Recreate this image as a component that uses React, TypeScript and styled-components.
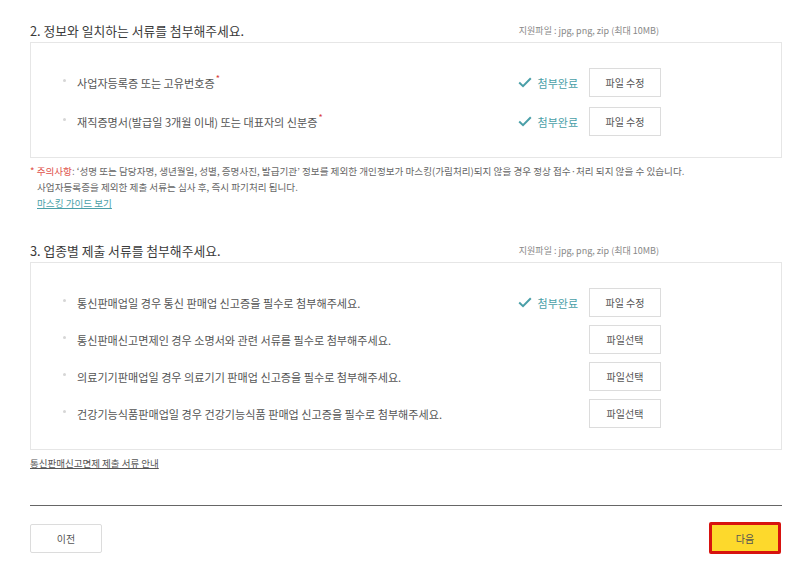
import styled, { createGlobalStyle } from "styled-components";

const GlobalStyle = createGlobalStyle`
  html, body {
    margin: 0;
    padding: 0;
    background: #fff;
  }
  body {
    font-family: "Noto Sans CJK KR", "Noto Sans", sans-serif;
    color: #333;
  }
`;

const Page = styled.div`
  width: 810px;
  box-sizing: border-box;
  padding: 18px 28px 0 30px;
`;

const SectionHead = styled.div`
  display: flex;
  justify-content: space-between;
  align-items: center;
  height: 24px;
  padding-right: 123px;
  & h2 {
    margin: 0;
    font-size: 12.8px;
    font-weight: 400;
    color: #3a3a3a;
  }
  & span {
    font-size: 9px;
    color: #888;
  }
`;

const Box = styled.div<{ $gap: number }>`
  border: 1px solid #e6e6e6;
  padding: 25px 120px 21px 32px;
  display: flex;
  flex-direction: column;
  gap: ${(p) => p.$gap}px;
`;

const Row = styled.div`
  display: flex;
  align-items: center;
  height: 29px;
`;

const Label = styled.div`
  flex: 1;
  display: flex;
  align-items: center;
  font-size: 11.1px;
  color: #555;
  &::before {
    content: "";
    width: 3px;
    height: 3px;
    border-radius: 50%;
    background: #d6d6d6;
    margin-right: 11px;
    margin-top: -4px;
  }
  & sup {
    color: #d9403a;
    font-size: 9px;
    line-height: 0;
    position: relative;
    top: -4px;
    margin-left: 1px;
  }
`;

const Done = styled.div`
  display: flex;
  align-items: center;
  gap: 6px;
  margin-right: 11px;
  font-size: 11px;
  color: #4a9fa8;
`;

const FileButton = styled.button`
  width: 72px;
  height: 29px;
  box-sizing: border-box;
  border: 1px solid #dcdcdc;
  background: #fff;
  font-family: inherit;
  font-size: 10px;
  color: #555;
  padding: 0;
`;

const Notice = styled.div`
  margin-top: 5px;
  font-size: 9.6px;
  line-height: 16px;
  color: #666;
  & p {
    margin: 0;
    padding-left: 7px;
  }
  & p.first {
    padding-left: 0;
  }
  & em {
    font-style: normal;
    color: #e0524a;
  }
  & a {
    margin-left: 7px;
    color: #4a9fa8;
    text-decoration: underline;
  }
`;

const Spacer = styled.div<{ $h: number }>`
  height: ${(p) => p.$h}px;
`;

const GuideLink = styled.a`
  display: block;
  margin-top: 6px;
  font-size: 9.5px;
  line-height: 14px;
  color: #555;
  text-decoration: underline;
`;

const Divider = styled.hr`
  margin: 35px 0 0;
  border: none;
  border-top: 1px solid #666;
`;

const Footer = styled.div`
  display: flex;
  justify-content: space-between;
  align-items: center;
  height: 34px;
  margin-top: 15px;
  padding-right: 1px;
`;

const NavButton = styled.button<{ $primary?: boolean }>`
  width: 72px;
  height: ${(p) => (p.$primary ? "32px" : "29px")};
  box-sizing: border-box;
  font-family: inherit;
  font-size: 10px;
  color: #555;
  padding: 0;
  background: ${(p) => (p.$primary ? "#fdd92c" : "#fff")};
  border: ${(p) => (p.$primary ? "3px solid #d7130f" : "1px solid #dcdcdc")};
  border-radius: 2px;
`;

const Check = () => (
  <svg width="14" height="11" viewBox="0 0 14 11">
    <path d="M1.2 5.6 L5 9.2 L12.8 1.2" fill="none" stroke="#4a9fa8" strokeWidth="2" />
  </svg>
);

type Item = { text: string; required?: boolean; done?: boolean };

const section2: Item[] = [
  { text: "사업자등록증 또는 고유번호증", required: true, done: true },
  { text: "재직증명서(발급일 3개월 이내) 또는 대표자의 신분증", required: true, done: true },
];

const section3: Item[] = [
  { text: "통신판매업일 경우 통신 판매업 신고증을 필수로 첨부해주세요.", done: true },
  { text: "통신판매신고면제인 경우 소명서와 관련 서류를 필수로 첨부해주세요." },
  { text: "의료기기판매업일 경우 의료기기 판매업 신고증을 필수로 첨부해주세요." },
  { text: "건강기능식품판매업일 경우 건강기능식품 판매업 신고증을 필수로 첨부해주세요." },
];

const FileRow = ({ item }: { item: Item }) => (
  <Row>
    <Label>
      {item.text}
      {item.required && <sup>*</sup>}
    </Label>
    {item.done && (
      <Done>
        <Check />
        첨부완료
      </Done>
    )}
    <FileButton>{item.done ? "파일 수정" : "파일선택"}</FileButton>
  </Row>
);

const App = () => {
  return (
    <>
      <GlobalStyle />
      <Page>
        <SectionHead>
          <h2>2. 정보와 일치하는 서류를 첨부해주세요.</h2>
          <span>지원파일 : jpg, png, zip (최대 10MB)</span>
        </SectionHead>
        <Box $gap={10}>
          {section2.map((item, i) => (
            <FileRow key={i} item={item} />
          ))}
        </Box>
        <Notice>
          <p className="first">
            <em>* 주의사항</em>: ‘성명 또는 담당자명, 생년월일, 성별, 증명사진, 발급기관’ 정보를 제외한
            개인정보가 마스킹(가림처리)되지 않을 경우 정상 접수·처리 되지 않을 수 있습니다.
          </p>
          <p>사업자등록증을 제외한 제출 서류는 심사 후, 즉시 파기처리 됩니다.</p>
          <a href="#">마스킹 가이드 보기</a>
        </Notice>
        <Spacer $h={27} />
        <SectionHead>
          <h2>3. 업종별 제출 서류를 첨부해주세요.</h2>
          <span>지원파일 : jpg, png, zip (최대 10MB)</span>
        </SectionHead>
        <Box $gap={8}>
          {section3.map((item, i) => (
            <FileRow key={i} item={item} />
          ))}
        </Box>
        <GuideLink href="#">통신판매신고면제 제출 서류 안내</GuideLink>
        <Divider />
        <Footer>
          <NavButton>이전</NavButton>
          <NavButton $primary>다음</NavButton>
        </Footer>
      </Page>
    </>
  );
};

export default App;
